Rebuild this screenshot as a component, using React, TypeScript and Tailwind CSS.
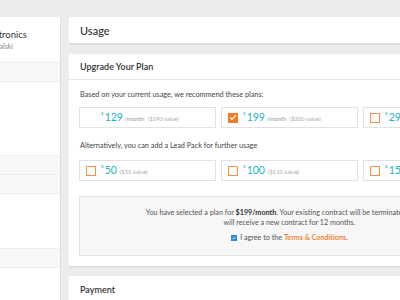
import React from "react";

function Check({ checked }: { checked?: boolean }) {
  if (checked) {
    return (
      <div className="w-[10px] h-[10px] bg-[#f47920] flex items-center justify-center shrink-0">
        <svg width="8" height="7" viewBox="0 0 8 7">
          <path d="M1 3.4 L3 5.5 L7 1" stroke="#fff" strokeWidth="1.2" fill="none" />
        </svg>
      </div>
    );
  }
  return <div className="w-[10px] h-[10px] border-[1.5px] border-[#f6924a] bg-white shrink-0" />;
}

function PlanBox({
  price,
  month,
  value,
  checked,
  hidden,
}: {
  price: string;
  month?: boolean;
  value: string;
  checked?: boolean;
  hidden?: boolean;
}) {
  return (
    <div className="h-[21px] border border-[#e2e2e2] bg-white flex items-center pl-[6px]">
      {hidden ? <div className="w-[10px] h-[10px] shrink-0" /> : <Check checked={checked} />}
      <div className="flex items-baseline ml-[5px] whitespace-nowrap">
        <span className="text-[4.5px] text-[#1ab3c0] self-start -mt-[1px] mr-[1px]">$</span>
        <span className="text-[10.5px] leading-none text-[#1ab3c0]">{price}</span>
        {month && <span className="text-[6.3px] text-[#9a9a9a] ml-[1px]">/month</span>}
        <span className="text-[5.8px] text-[#aaaaaa] ml-[3px]">{value}</span>
      </div>
    </div>
  );
}

export default function App() {
  return (
    <div className="w-[400px] h-[300px] overflow-hidden bg-[#ececec] flex pt-[17px] font-['Lato',sans-serif]">
      <div className="w-[61px] h-[283px] shrink-0 bg-white border-r border-[#e0e0e0] overflow-hidden">
        <div className="h-[46px] pt-[12px] border-b border-[#ececec]">
          <div className="w-[27px] flex justify-end">
            <div className="shrink-0 text-[9.5px] leading-[12px] text-[#333] whitespace-nowrap">Nexus Electronics</div>
          </div>
          <div className="w-[13px] flex justify-end">
            <div className="shrink-0 text-[7px] leading-[10px] text-[#8a8a8a] whitespace-nowrap">Mark Kowalski</div>
          </div>
        </div>
        <div className="h-[19px] bg-[#f8f8f8] border-b border-[#efefef]" />
        <div className="h-[73px]" />
        <div className="h-[20px] bg-[#f8f8f8] border-t border-b border-[#efefef]" />
        <div className="h-[19px] bg-[#f8f8f8] border-b border-[#efefef]" />
        <div className="h-[54px]" />
        <div className="h-[20px] bg-[#f8f8f8] border-t border-b border-[#efefef]" />
      </div>
      <div className="w-[441px] shrink-0 ml-[8px] flex flex-col">
        <div className="h-[28px] bg-white border-b-2 border-[#dedede] flex items-center px-[11px] pt-[1px] shrink-0">
          <span className="text-[11px] leading-[14px] text-[#333] font-medium">Usage</span>
        </div>
        <div className="mt-[9px] bg-white border-b-2 border-[#dedede] shrink-0">
          <div className="h-[26px] border-b border-[#e5e5e5] flex items-center px-[11px]">
            <span className="text-[9px] text-[#333] font-semibold">Upgrade Your Plan</span>
          </div>
          <div className="px-[10px] pb-[10px]">
            <div className="text-[7.3px] leading-[10px] text-[#444] pt-[10px] h-[27px] pl-[1px] whitespace-nowrap">
              Based on your current usage, we recommend these plans:
            </div>
            <div className="grid grid-cols-3 gap-[5px]">
              <PlanBox price="129" month value="($190 value)" hidden />
              <PlanBox price="199" month value="($300 value)" checked />
              <PlanBox price="299" month value="($450 value)" />
            </div>
            <div className="text-[7.3px] leading-[10px] text-[#444] pt-[13px] h-[32px] pl-[1px] whitespace-nowrap">
              Alternatively, you can add a Lead Pack for further usage
            </div>
            <div className="grid grid-cols-3 gap-[5px]">
              <PlanBox price="50" value="($55 value)" />
              <PlanBox price="100" value="($110 value)" />
              <PlanBox price="150" value="($165 value)" />
            </div>
            <div className="mt-[15px] h-[60px] bg-[#f7f7f7] border border-[#e3e3e3] flex flex-col items-center pt-[11px]">
              <div className="text-[7.2px] leading-[10px] text-[#555] text-center whitespace-nowrap">
                You have selected a plan for <span className="font-bold text-[#333]">$199/month</span>. Your existing contract will be terminated and you
              </div>
              <div className="text-[7.2px] leading-[10px] text-[#555] text-center whitespace-nowrap">
                will receive a new contract for 12 months.
              </div>
              <div className="flex items-center mt-[5px] text-[7.2px] leading-[10px] text-[#555] whitespace-nowrap">
                <div className="w-[6px] h-[6px] bg-[#2b8bd6] mr-[3px] flex items-center justify-center">
                  <svg width="4" height="4" viewBox="0 0 4 4">
                    <path d="M0.6 2 L1.6 3 L3.4 0.8" stroke="#fff" strokeWidth="0.8" fill="none" />
                  </svg>
                </div>
                I agree to the&nbsp;<span className="text-[#f47920] font-semibold">Terms &amp; Conditions</span>.
              </div>
            </div>
          </div>
        </div>
        <div className="mt-[8px] bg-white h-[40px] px-[11px] pt-[8px] shrink-0 text-[9px] leading-[12px] text-[#333] font-semibold">
          Payment
        </div>
      </div>
    </div>
  );
}
